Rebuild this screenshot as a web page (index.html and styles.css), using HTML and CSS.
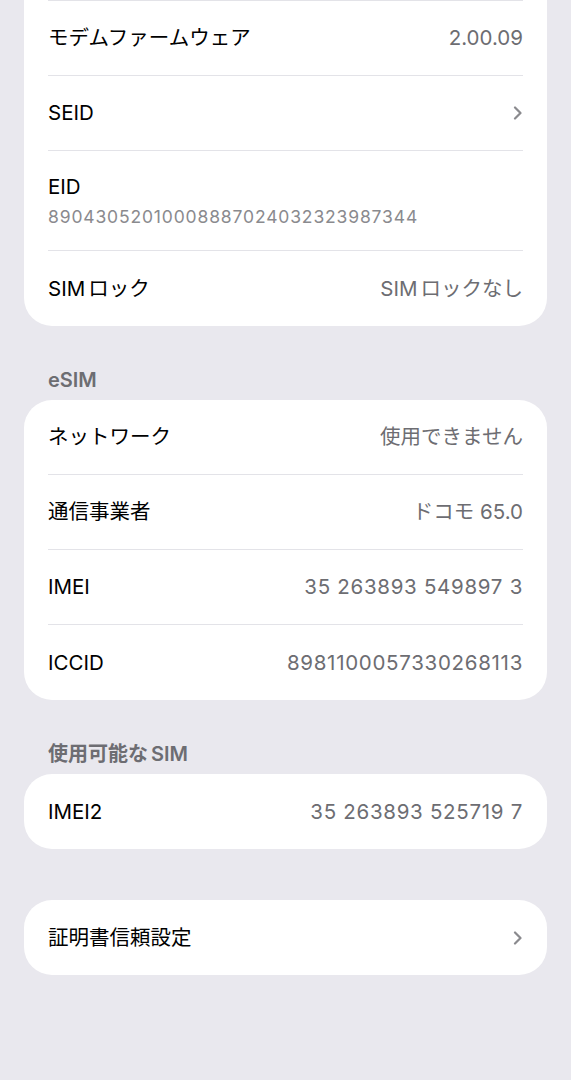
FILE: index.html
```html
<!DOCTYPE html>
<html lang="ja">
<head>
    <meta charset="UTF-8">
    <meta name="viewport" content="width=device-width, initial-scale=1.0">
    <title>情報</title>
    <link rel="stylesheet" href="styles.css">
</head>
<body>

    <div class="page">

        <div class="card cut">
            <div class="row">
                <span class="label">モデムファームウェア</span>
                <span class="value">2.00.09</span>
            </div>
            <div class="row">
                <span class="label">SEID</span>
                <svg class="chevron" viewBox="0 0 10 14" width="10" height="14"><path d="M2 1.5 L7.5 7 L2 12.5"/></svg>
            </div>
            <div class="row stacked">
                <span class="label">EID</span>
                <span class="sub num">89043052010008887024032323987344</span>
            </div>
            <div class="row">
                <span class="label">SIM<span class="gap"></span>ロック</span>
                <span class="value">SIM<span class="gap"></span>ロックなし</span>
            </div>
        </div>

        <h3 class="section-title">eSIM</h3>
        <div class="card">
            <div class="row">
                <span class="label">ネットワーク</span>
                <span class="value">使用できません</span>
            </div>
            <div class="row">
                <span class="label">通信事業者</span>
                <span class="value">ドコモ 65.0</span>
            </div>
            <div class="row">
                <span class="label">IMEI</span>
                <span class="value num">35 263893 549897 3</span>
            </div>
            <div class="row">
                <span class="label">ICCID</span>
                <span class="value num">8981100057330268113</span>
            </div>
        </div>

        <h3 class="section-title">使用可能な<span class="gap"></span>SIM</h3>
        <div class="card">
            <div class="row">
                <span class="label">IMEI2</span>
                <span class="value num">35 263893 525719 7</span>
            </div>
        </div>

        <div class="card spaced">
            <div class="row">
                <span class="label">証明書信頼設定</span>
                <svg class="chevron" viewBox="0 0 10 14" width="10" height="14"><path d="M2 1.5 L7.5 7 L2 12.5"/></svg>
            </div>
        </div>

    </div>

</body>
</html>
```

FILE: styles.css
```css
body {
    margin: 0;
    background-color: #e9e8ee;
    font-family: Inter, "Noto Sans CJK JP", sans-serif;
    color: #000;
}

.page {
    padding: 0 24px 40px;
}

.card {
    background-color: #fff;
    border-radius: 28px;
}

/* list scrolled up: top edge is off screen */
.card.cut {
    border-top-left-radius: 0;
    border-top-right-radius: 0;
}

.card.spaced {
    margin-top: 51px;
}

.row {
    display: flex;
    align-items: center;
    justify-content: space-between;
    min-height: 74px;
    margin: 0 24px;
    font-size: 20.5px;
    line-height: 26px;
}

.row:last-child {
    min-height: 75px;
}

.row + .row,
.card.cut .row:first-child {
    border-top: 1px solid #e3e3e8;
}

.row.stacked {
    flex-direction: column;
    align-items: flex-start;
    justify-content: flex-start;
    min-height: 0;
    padding: 23px 0 21px;
}

/* small space between latin and kana, like iOS does */
.gap {
    display: inline-block;
    width: 3px;
}

.value {
    color: #6d6d72;
}

.num {
    letter-spacing: 0.7px;
}

.sub {
    margin-top: 5px;
    font-size: 17.5px;
    line-height: 24px;
    color: #8a8a8e;
}

.sub.num {
    letter-spacing: 0.85px;
}

.chevron {
    fill: none;
    stroke: #8a8a8e;
    stroke-width: 2.2;
    stroke-linecap: round;
    stroke-linejoin: round;
}

.section-title {
    margin: 0 24px;
    padding: 42px 0 8px;
    font-size: 20px;
    line-height: 24px;
    font-weight: 600;
    color: #6d6d72;
}
```
